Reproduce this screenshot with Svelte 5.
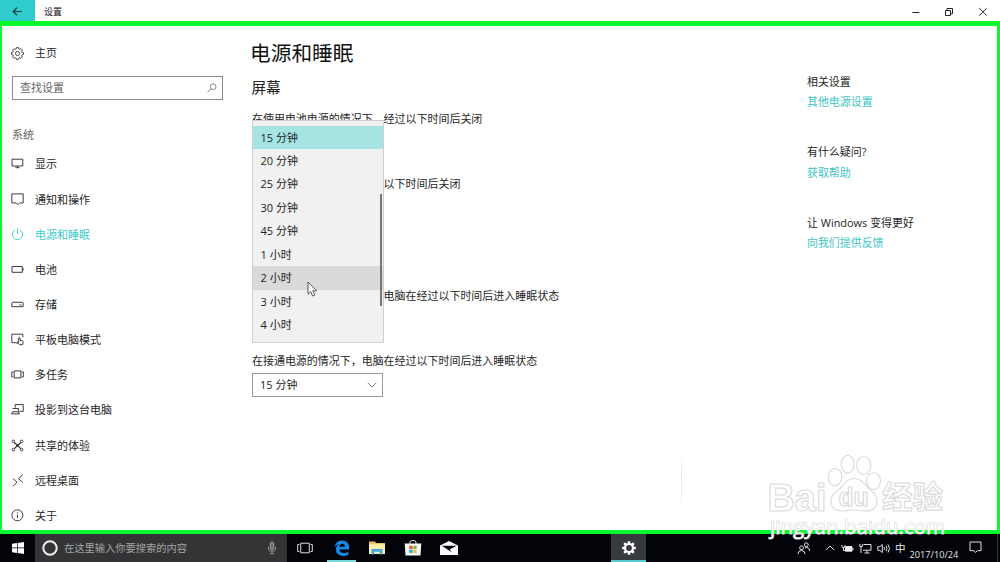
<script>
  const nav = [
    { id: 'display', label: '显示' },
    { id: 'notify', label: '通知和操作' },
    { id: 'power', label: '电源和睡眠', active: true },
    { id: 'battery', label: '电池' },
    { id: 'storage', label: '存储' },
    { id: 'tablet', label: '平板电脑模式' },
    { id: 'multi', label: '多任务' },
    { id: 'project', label: '投影到这台电脑' },
    { id: 'shared', label: '共享的体验' },
    { id: 'remote', label: '远程桌面' },
    { id: 'about', label: '关于' }
  ];
  const options = ['15 分钟', '20 分钟', '25 分钟', '30 分钟', '45 分钟', '1 小时', '2 小时', '3 小时', '4 小时'];
  const related = [
    { title: '相关设置', link: '其他电源设置' },
    { title: '有什么疑问?', link: '获取帮助' },
    { title: '让 Windows 变得更好', link: '向我们提供反馈' }
  ];
  // Outline of an eight-toothed gear centred on the origin
  const gear = (outer, inner) => {
    const pts = [];
    for (let i = 0; i < 8; i++) {
      const a = (i * Math.PI) / 4;
      for (const [d, r] of [[-0.26, inner], [-0.17, outer], [0.17, outer], [0.26, inner]]) {
        pts.push(`${(Math.sin(a + d) * r).toFixed(2)},${(-Math.cos(a + d) * r).toFixed(2)}`);
      }
    }
    return pts.join(' ');
  };
</script>

<div class="screen">
  <header class="titlebar">
    <div class="back">
      <svg width="11" height="9" viewBox="0 0 11 9"><path d="M10 4.5H1.2M5 .8 1.2 4.5 5 8.2" /></svg>
    </div>
    <span class="apptitle">设置</span>
    <div class="controls">
      <svg width="34" height="22" viewBox="0 0 34 22"><path d="M14.3 12.5h7" /></svg>
      <svg width="34" height="22" viewBox="0 0 34 22"><path d="M13.5 10.500h5v5h-5zM15 10.300V8.500h5.500v5.300h-1.800" /></svg>
      <svg width="34" height="22" viewBox="0 0 34 22"><path d="M13.200 8l7.600 7.600M20.800 8l-7.600 7.600" /></svg>
    </div>
  </header>

  <div class="body">
    <nav class="sidebar">
      <div class="item home">
        <svg class="ico" viewBox="-6.5 -6.5 13 13"><polygon points={gear(6, 4.8)} stroke-width=".85" /><circle r="2.1" stroke-width=".85" /></svg>
        <span>主页</span>
      </div>
      <div class="search">
        <span>查找设置</span>
        <svg width="10" height="10" viewBox="0 0 10 10"><circle cx="6.1" cy="3.7" r="2.9" /><path d="M4 5.8.6 9.3" /></svg>
      </div>
      <div class="group">系统</div>
      {#each nav as n}
        <div class="item" class:active={n.active}>
          <svg class="ico" viewBox="0 0 13 13">
            {#if n.id === 'display'}
              <path d="M1 2.2h10.800v6.8H1zM6.4 9v1.600M4.300 10.700h4.200" />
            {:else if n.id === 'notify'}
              <path d="M.8 .9h11.400v9H8.6L6.9 11.700 5.200 9.900H.8z" />
            {:else if n.id === 'power'}
              <path d="M6.5.5v5.300M4.200 2a5.100 5.100 0 1 0 4.600 0" />
            {:else if n.id === 'battery'}
              <path d="M1 3.500h10.300v5.800H1zM12.100 5.200v2.400" />
            {:else if n.id === 'storage'}
              <path d="M1.400 4.300h10.200l.6.900v3.500H.8V5.200zM8.500 7h2" />
            {:else if n.id === 'tablet'}
              <path d="M4.800 9.700H.8V1.200h11v3M4.800 10h2.600" />
              <path d="M7.700 9V4.800q.7-.9 1.300 0v2.600l2.600.5q.8.3.6 1.300l-.6 2.500H8.500L6 9.200q.3-1 1.700.2" />
            {:else if n.id === 'multi'}
              <path d="M3.200 2.900h6.700v7H3.200zM2.300 3.900H.8v5h1.500M10.800 3.900h1.500v5h-1.500" />
            {:else if n.id === 'project'}
              <path d="M4.200 4.700V1.600h8v6.700H8.300M1.600 5.500h5.800v3.300H1.600L.6 10.900h7.900L7.400 8.800" />
            {:else if n.id === 'shared'}
              <path stroke-width="1.200" d="M3.300 3.500 9.800 9.600M9.800 3.500 3.300 9.600" />
              <circle cx="2.400" cy="2.400" r="1.300" /><circle cx="10.600" cy="2.400" r="1.300" />
              <circle cx="2.400" cy="10.600" r="1.300" /><circle cx="10.600" cy="10.600" r="1.300" /><circle cx="6.500" cy="6.500" r=".8" />
            {:else if n.id === 'remote'}
              <path d="M2 4.500 6 8.300 2 12.200M11.700.8 7.500 4.600l4.200 3.900" />
            {:else}
              <circle cx="6.400" cy="6.300" r="5.500" /><path d="M6.400 5.500V9.200M6.400 3.200v1.200" />
            {/if}
          </svg>
          <span>{n.label}</span>
        </div>
      {/each}
    </nav>

    <main>
      <h1>电源和睡眠</h1>
      <h2>屏幕</h2>
      <div class="field first">在使用电池电源的情况下，经过以下时间后关闭
        <div class="menu">
          {#each options as o, i}
            <div class="opt" class:chosen={i === 0} class:hover={i === 6}><span>{o}</span></div>
          {/each}
          <i class="thumb"></i>
          <svg class="cursor" width="11" height="17" viewBox="0 0 11 17"><path d="M1 1v12.200l2.700-2.600 1.900 4.400 2.200-1-1.900-4.200h3.700z" /></svg>
        </div>
      </div>
      <div class="field second">在接通电源的情况下，经过以下时间后关闭</div>
      <div class="field third">在使用电池电源的情况下，电脑在经过以下时间后进入睡眠状态</div>
      <div class="field fourth">在接通电源的情况下，电脑在经过以下时间后进入睡眠状态</div>
      <div class="select">
        <span>15 分钟</span>
        <svg width="10" height="6" viewBox="0 0 10 6"><path d="M.7.7 5 5 9.300.7" /></svg>
      </div>
    </main>

    <aside>
      {#each related as r}
        <section>
          <div>{r.title}</div>
          <a>{r.link}</a>
        </section>
      {/each}
    </aside>
    <i class="edge-shade"></i>
  </div>

  <footer class="taskbar">
    <div class="start">
      <svg width="12" height="12" viewBox="0 0 12 12"><path d="M0 1.700 5.200 1v4.600H0zM5.900.9 12 0v5.600H5.900zM0 6.300h5.200V11L0 10.300zM5.900 6.300H12V12l-6.100-.9z" /></svg>
    </div>
    <div class="cortana">
      <svg class="line" width="16" height="16" viewBox="0 0 16 16"><circle cx="8" cy="8" r="6.700" stroke="#eee" stroke-width="2" /></svg>
      <span>在这里输入你要搜索的内容</span>
      <svg class="line" width="10" height="14" viewBox="0 0 10 14"><rect x="3.300" y="1" width="3.400" height="7.500" rx="1.700" stroke="#aaa" fill="#666" /><path d="M1.500 6v2.200q0 2 3.500 2t3.500-2V6M5 10.300V13M3.200 12.800h3.600" stroke="#999" /></svg>
    </div>
    <div class="app view">
      <svg class="line" width="16" height="12" viewBox="0 0 16 12"><path d="M3.700 1.200h8.600v9.600H3.700zM2.400 2.500H.7v7h1.700M13.600 2.500h1.700v7h-1.700" stroke="#ddd" /></svg>
    </div>
    <div class="app running">
      <svg width="16" height="16" viewBox="0 0 16 16"><path fill="#1687e5" d="M.5 7.300C1.200 3 4 .5 8 .5c4.700 0 7.200 3.200 7.200 7.100v1.800H5.300c.2 2.500 2.200 3.500 4.600 3.500 1.700 0 3.100-.4 4.400-1.200v3.100c-1.400.8-3.200 1.100-5.100 1.100-4.500 0-7.300-2.500-7.300-6.300 0-2.600 1.400-4.500 3.700-5.700C3.700 4.300 1.900 5.200.5 7.300zM5.500 6.700h5.400c0-1.700-.8-2.900-2.500-2.900S5.800 5 5.500 6.700z" /></svg>
    </div>
    <div class="app">
      <svg width="16" height="14" viewBox="0 0 16 14"><path fill="#e9c559" d="M0 .5h6l1 1.500h9v10.500H0z" /><path fill="#fff0a9" d="M0 3.200h16V13H0z" /><path fill="#47a9df" d="M2.500 8h11v5.500h-2.800v-2.700H5.300v2.700H2.500z" /></svg>
    </div>
    <div class="app">
      <svg width="18" height="18" viewBox="0 0 18 18"><path d="M6 5V3.200Q6 1.500 9 1.500t3 1.700V5" fill="none" stroke="#ddd" /><path fill="#f5f5f5" d="M.7 4.500h16.600L16.500 16.500h-15z" /><path fill="#e95429" d="M5.300 6.800h3.300V10H5.300z" /><path fill="#78b83b" d="M9.300 6.800h3.300V10H9.300z" /><path fill="#25a5e8" d="M5.300 10.700h3.300v3.200H5.300z" /><path fill="#f6bd22" d="M9.300 10.700h3.300v3.200H9.300z" /></svg>
    </div>
    <div class="app">
      <svg width="18" height="14" viewBox="0 0 18 14"><path fill="#fafafa" d="M0 4.500 9 0l9 4.500V14H0z" /><path fill="#05070b" d="M1.800 4.700h14.700L9.600 8.500l2.500 3z" /></svg>
    </div>
    <div class="app settings">
      <svg width="14" height="14" viewBox="-7 -7 14 14"><polygon points={gear(6.9, 5.1)} fill="#fff" /><circle r="2.900" fill="#36393e" /></svg>
    </div>
    <div class="tray">
      <svg class="line people" width="14" height="13" viewBox="0 0 14 13"><circle cx="4.500" cy="5.800" r="1.900" /><path d="M1 12q0-3.500 3.500-3.500T8 12" /><circle cx="9.300" cy="2.800" r="1.900" /><path d="M7.800 6.100q4.700-2 4.700 3" /></svg>
      <svg class="line up" width="10" height="6" viewBox="0 0 10 6"><path d="M1 5 5 1l4 4" /></svg>
      <svg class="line batt" width="13" height="9" viewBox="0 0 13 9"><path d="M4.500 2.500H11v4.700H4.500z" fill="#eee" /><path d="M12 4v2M1 1v2.300h3V1M2.500 3.500v3h2" /></svg>
      <svg class="line net" width="13" height="11" viewBox="0 0 13 11"><path d="M4.500 1.500H12v5.700H4M8 7.500v2.300M5.500 10h5M.8.900v2.600h2.500V.9M2 3.500V10" /></svg>
      <svg class="line sound" width="14" height="11" viewBox="0 0 14 11"><path d="M.8 3.700h2L5.300 1.500v8L2.800 7.300h-2zM7 4q1 1.500 0 3M9 2.700q2 2.800 0 5.600M11 1.500q3 4 0 8" /></svg>
      <span class="ime">中</span>
      <span class="date">2017/10/24</span>
      <svg class="line action" width="13" height="13" viewBox="0 0 13 13"><path d="M1 1h11v8.700H8.300L6.500 11.500 4.700 9.700H1z" /></svg>
    </div>
    <i class="peek"></i>
  </footer>

  <svg class="mark" width="200" height="100" viewBox="0 0 200 100">
    <g fill="#fff" stroke="#dcdcdc" stroke-width="1.200">
      <ellipse cx="75" cy="32" rx="6.800" ry="8.700" />
      <ellipse cx="87.700" cy="19.300" rx="6.500" ry="9" />
      <ellipse cx="103.700" cy="20.500" rx="7" ry="9" />
      <ellipse cx="113.500" cy="36" rx="7" ry="8.500" />
      <path d="M94 33.500c7 0 10 5 15 10 5 4 8 7 8 12.500 0 6-4 10-10 10-5 0-8-1-13-1s-8 1-12 1c-7 0-11-4-11-10 0-6.500 5-9 9-12.500 5-5 7-10 14-10z" />
      <text x="7.500" y="65.500" class="bai" textLength="59" lengthAdjust="spacingAndGlyphs">Bai</text>
      <text x="78.500" y="61" class="du" textLength="30" lengthAdjust="spacingAndGlyphs">du</text>
      <text x="122" y="62.500" class="jy" textLength="61" lengthAdjust="spacingAndGlyphs">经验</text>
    </g>
    <text x="10" y="88.500" class="url" textLength="175" lengthAdjust="spacingAndGlyphs">jingyan.baidu.com</text>
  </svg>
</div>

<style>
  :global(body) { margin: 0; overflow: hidden; }
  .screen {
    position: relative; width: 1000px; height: 562px; display: flex; flex-direction: column;
    background: #fff; color: #262626; overflow: hidden;
    font: 11px/16px "Open Sans", "Noto Sans CJK SC", sans-serif;
    white-space: nowrap;
  }
  .screen * { box-sizing: border-box; }
  svg { display: block; flex: none; fill: none; }
  .titlebar { height: 21px; flex: none; display: flex; align-items: center; }
  .back { width: 35px; height: 21px; background: #30cbcd; display: flex; align-items: center; justify-content: center; padding-top: 2px; }
  .back svg { stroke: #173f43; stroke-width: 1.2; }
  .apptitle { font-size: 9px; margin: 2px 0 0 9px; color: #111; }
  .controls { margin-left: auto; display: flex; stroke: #222; stroke-width: 1; }
  .body {
    height: 513px; flex: none; display: flex; position: relative;
    border: solid #08fa2e; border-width: 5px 3px 4px 2px;
  }
  .sidebar { width: 249px; padding-top: 9px; }
  .item { height: 35.15px; display: flex; align-items: center; padding-left: 9px; gap: 11px; }
  .item span { padding-top: 1px; }
  .item.home { height: 36px; }
  .home span { padding-top: 0; }
  .ico { width: 13px; height: 13px; stroke: #333; stroke-width: 0.95; }
  .active { color: #3ecacb; }
  .active .ico { stroke: #3ecacb; }
  .search {
    width: 211px; height: 24px; margin: 5px 0 0 9.5px; padding: 0 5px 0 7.5px; border: 1.5px solid #8a8a8a;
    display: flex; align-items: center; justify-content: space-between; color: #666;
  }
  .search svg { stroke: #777; stroke-width: 0.9; }
  .group { margin: 27px 0 3.4px 10px; color: #666; }
  main { width: 555px; padding-top: 12px; }
  h1 { margin: 0 0 0 -1px; font-size: 20.7px; line-height: 30px; font-weight: 400; color: #111; }
  h2 { margin: 8px 0 0 0.5px; font-size: 14.6px; line-height: 22px; font-weight: 400; color: #222; }
  .field { height: 16px; margin-left: 1px; font-size: 10.98px; }
  .first { margin-top: 13px; position: relative; }
  .second { margin-top: 49px; }
  .third { margin-top: 96px; }
  .fourth { margin-top: 49px; }
  .menu {
    position: absolute; left: 0; top: 9px; width: 132px; height: 223px; padding-top: 4.5px;
    background: #f1f1f1; border: 1px solid #d0d0d0; z-index: 2;
  }
  .opt { height: 23.45px; line-height: 23px; padding-left: 7.5px; font-size: 11px; color: #222; }
  .chosen { background: #a5e4e2; }
  .hover { background: #dadada; }
  .thumb { position: absolute; left: 127px; top: 73px; width: 2px; height: 112px; background: #777; }
  .cursor { position: absolute; left: 54px; top: 160px; fill: #fff; stroke: #444; stroke-width: 0.9; }
  .select {
    width: 131px; height: 24px; margin: 4px 0 0 1px; border: 1.5px solid #999; padding: 0 5px 0 7px;
    display: flex; align-items: center; justify-content: space-between;
  }
  .select svg { stroke: #888; }
  aside { padding: 48px 0 0 1px; font-size: 10.95px; }
  section { height: 70.3px; }
  section div { height: 20.3px; }
  a { color: #3ec5c6; display: block; }
  .edge-shade { position: absolute; left: 679px; top: 430px; width: 1px; height: 55px; background: linear-gradient(#fff, #e9e9e9 30%, #eee 70%, #fff); }
  .taskbar { height: 28px; flex: none; display: flex; align-items: stretch; background: #02040a; }
  .start { width: 35px; display: flex; align-items: center; justify-content: center; }
  .start svg { fill: #fff; }
  .line { stroke: #e4e4e4; stroke-width: 1; }
  .cortana { width: 251.5px; background: #333435; color: #a5a5a5; display: flex; align-items: center; padding: 0 10px 0 7px; font-size: 10.25px; }
  .cortana span { margin: 0 auto 0 6px; }
  .app { width: 36px; display: flex; align-items: center; justify-content: center; }
  .view { margin-right: 1.5px; }
  .running { width: 35px; background: linear-gradient(#77d8dd, #77d8dd) center bottom / 29px 2px no-repeat; }
  .settings { width: 35px; margin-left: 144px; background: #36393e; border-bottom: 2px solid #58cbd1; padding-top: 1px; }
  .tray { display: flex; align-items: center; color: #e4e4e4; }
  .people { margin-left: 151px; }
  .up { margin-left: 14px; }
  .batt { margin-left: 6px; }
  .net { margin-left: 5px; }
  .sound { margin-left: 5px; }
  .ime { margin-left: 4px; font-size: 10.5px; }
  .date { margin: 13px 0 0 4px; font-size: 9.2px; width: 49px; }
  .action { margin: -1px 0 0 10px; }
  .peek { margin: 0 2px 0 auto; width: 1px; background: #33363a; }
  .mark { position: absolute; left: 760px; top: 445px; z-index: 3; }
  .bai { font: bold 39px "Liberation Sans", sans-serif; }
  .du { font: bold 25px "Liberation Sans", sans-serif; }
  .jy { font: bold 31px "Noto Sans CJK SC", sans-serif; }
  .url { font: 20px "Open Sans", sans-serif; fill: #fff; fill-opacity: 0.95; stroke: #d4d4d4; stroke-width: 1; paint-order: stroke; }
</style>
